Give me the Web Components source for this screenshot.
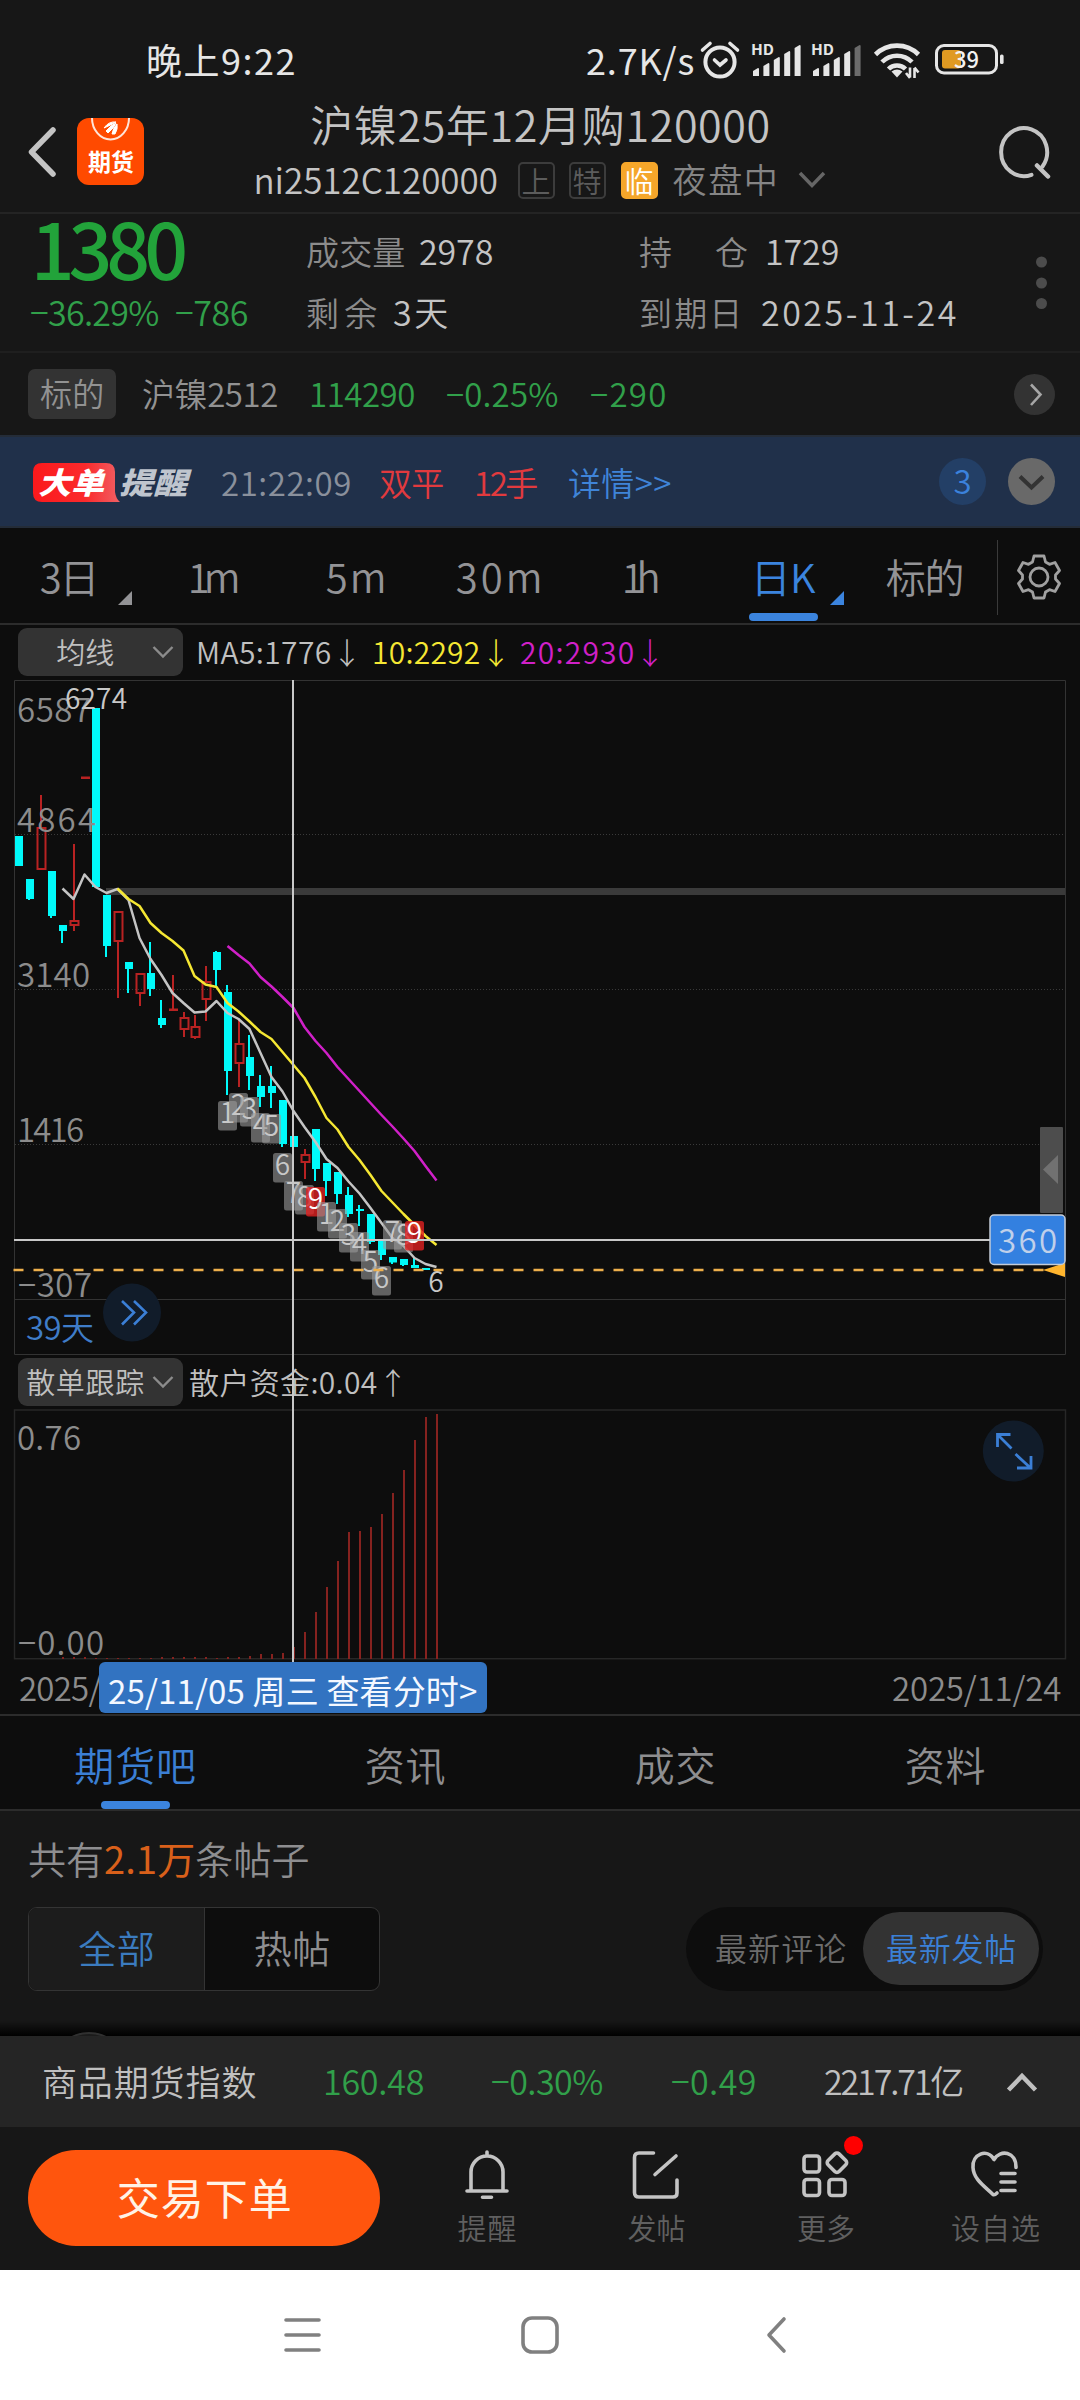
<!DOCTYPE html>
<html lang="zh-CN">
<head>
<meta charset="utf-8">
<title>沪镍25年12月购120000</title>
<style>
	html, body {
		margin: 0;
		padding: 0;
		background: #171717;
	}

	body {
		width: 1080px;
		height: 2400px;
		overflow: hidden;
		font-family: "Noto Sans CJK SC", "Noto Sans", sans-serif;
		font-weight: 350;
		color: #c4c4c4;
	}
</style>
</head>
<body>
<option-page></option-page>

<script>
// every block renders its static template into an open shadow root
class BaseBlock extends HTMLElement {
	constructor() {
		super();
		this.attachShadow({ mode: 'open' }).innerHTML = this.template();
	}
}

class OptionPage extends BaseBlock {
	template() {
		return `
		<style>
			:host { display: flex; flex-direction: column; height: 2400px; }
		</style>
		<status-bar></status-bar>
		<page-header></page-header>
		<quote-panel></quote-panel>
		<underlying-row></underlying-row>
		<order-alert></order-alert>
		<period-tabs></period-tabs>
		<market-chart></market-chart>
		<page-tabs></page-tabs>
		<post-panel></post-panel>
		<index-bar></index-bar>
		<trade-bar></trade-bar>
		<system-nav></system-nav>`;
	}
}

class StatusBar extends BaseBlock {
	template() {
		const bars = last => [0, 1, 2, 3, 4].map(i =>
			`<path d="M${2 + i * 10.4} ${[26, 21, 15, 9, 3][i] + 3}l5-3q1 0 1 1V34h-6Z" fill="${i === 4 ? last : '#e6e6e6'}"/>`).join('');
		return `
		<style>
			:host { display: flex; height: 100px; padding: 0 75px 0 147px; box-sizing: border-box; align-items: center; color: #e6e6e6; font-size: 36px; font-weight: 400; }
			.clock { margin-right: auto; }
			fit-text { line-height: 50px; height: 50px; margin-top: 17px; }
			svg { display: block; margin-top: 20px; overflow: visible; }
			text { font-size: 14px; font-weight: 700; fill: #e6e6e6; }
			.num { font-size: 23px; font-weight: 500; fill: #f2f2f2; }
		</style>
		<fit-text class="clock" w="147">晚上9:22</fit-text>
		<fit-text w="106">2.7K/s</fit-text>
		<svg style="margin-left:7px" width="41" height="38" viewBox="0 0 41 38" fill="none" stroke="#e6e6e6" stroke-linecap="round">
			<circle cx="20" cy="21" r="14.6" stroke-width="4"/>
			<path d="M2.5 9 10 2.5M30 2.5 37.500 9" stroke-width="3.600"/>
			<path d="m14.500 19 5.500 5 6-5" stroke-width="3.600"/>
		</svg>
		<svg style="margin-left:10px" width="50" height="36" viewBox="0 0 50 36">
			<text x="0" y="13" textLength="23" lengthAdjust="spacingAndGlyphs">HD</text>${bars('#e6e6e6')}
		</svg>
		<svg style="margin-left:10px" width="50" height="36" viewBox="0 0 50 36">
			<text x="0" y="13" textLength="23" lengthAdjust="spacingAndGlyphs">HD</text>${bars('#6b6b6b')}
		</svg>
		<svg style="margin-left:13px" width="47" height="37" viewBox="0 0 47 37" fill="none" stroke="#e6e6e6" stroke-width="4.600">
			<path d="M1.500 12.500a30.500 30.500 0 0 1 43 0"/>
			<path d="M8 20a21 21 0 0 1 30 0"/>
			<path d="M14.500 27a12 12 0 0 1 17 0"/>
			<path d="m17.500 29.500q5.500-4 11 0L23 35.500Z" fill="#e6e6e6" stroke="none"/>
			<path d="M36 25.500v10m-4-4.500 4 5M40.500 36V26m4 4.500-4-5" stroke-width="2.600"/>
		</svg>
		<svg style="margin-left:14px" width="70" height="32" viewBox="0 0 70 32">
			<rect x="1.500" y="1.500" width="60" height="27.500" rx="7.500" fill="none" stroke="#e6e6e6" stroke-width="3"/>
			<rect x="7" y="6" width="19" height="18.500" rx="3" fill="#e09a22"/>
			<rect x="65" y="10.500" width="3.600" height="9.500" rx="1.600" fill="#e6e6e6"/>
			<text class="num" x="19" y="24" textLength="25" lengthAdjust="spacingAndGlyphs">39</text>
		</svg>`;
	}
}

class PageHeader extends BaseBlock {
	template() {
		return `
		<style>
			:host { display: grid; grid-template-columns: 1fr auto 1fr; height: 114px; box-sizing: border-box; border-bottom: 2px solid #242424; }
			.left { display: flex; padding: 18px 0 0 28px; gap: 21px; }
			.left > svg { margin-top: 9px; }
			.logo { width: 67px; height: 67px; border-radius: 12px; background: #ff4a00; }
			.title { font-size: 43px; line-height: 47px; height: 50px; }
			.center { display: flex; flex-direction: column; align-items: center; }
			.sub { display: flex; align-items: center; font-size: 35px; height: 50px; margin-top: 5px; }
			.sub fit-text { line-height: 52px; height: 54px; }
			.tag { width: 37px; height: 37px; box-sizing: border-box; border: 2px solid #3c3c3c; border-radius: 5px; font-size: 29px; line-height: 32px; text-align: center; color: #5c5c5c; }
			.tag.hot { border-color: #f5a62a; background: #f5a62a; color: #fff; }
			.search { justify-self: end; margin: 25px 28px 0 0; }
		</style>
		<div class="left">
			<svg width="28" height="50" viewBox="0 0 28 50" fill="none" stroke="#c4c4c4" stroke-width="5.500" stroke-linecap="round" stroke-linejoin="round"><path d="M25 3 3.500 25 25 47"/></svg>
			<div class="logo">
				<svg width="67" height="67" viewBox="0 0 67 67">
					<path d="M15 0a18.500 21.500 0 0 0 37 0" fill="none" stroke="#ffe4d8" stroke-width="2"/>
					<path d="M27 10q5-7 12-6-5 3-12 6Zm2 3q5-6 10-8-2 5-8 10Zm6 3q1-6 5-10 1 5-2 10Z" fill="#fff" stroke="#fff" stroke-width="1"/>
					<text x="11" y="53" font-size="24" font-weight="700" fill="#fff" textLength="46" lengthAdjust="spacingAndGlyphs">期货</text>
				</svg>
			</div>
		</div>
		<div class="center">
			<fit-text class="title" w="457">沪镍25年12月购120000</fit-text>
			<div class="sub">
				<fit-text w="242">ni2512C120000</fit-text>
				<span class="tag" style="margin-left:21px">上</span>
				<span class="tag" style="margin-left:14px">特</span>
				<span class="tag hot" style="margin-left:15px">临</span>
				<fit-text w="103" style="margin-left:16px;color:#858585;font-size:34px">夜盘中</fit-text>
				<svg style="margin-left:21px" width="28" height="18" viewBox="0 0 28 18" fill="none" stroke="#666" stroke-width="3.500"><path d="M2 2 14 14.500 26 2"/></svg>
			</div>
		</div>
		<svg class="search" width="53" height="54" viewBox="0 0 53 54" fill="none" stroke="#c4c4c4" stroke-width="4" stroke-linecap="round">
			<path d="M32.500 49.800A23 24 0 1 1 43.500 41.500"/>
			<path d="m38 40.500 11 11" stroke-width="4.500"/>
		</svg>`;
	}
}

class QuotePanel extends BaseBlock {
	template() {
		return `
		<style>
			:host { display: grid; grid-template-columns: 276px 333px 396px auto; height: 139px; padding-left: 31px; box-sizing: border-box; border-bottom: 2px solid #1f1f1f; font-size: 34px; }
			.row { display: flex; line-height: 62px; height: 61px; }
			.col { padding-top: 6px; }
			.price { display: block; margin-left: 2px; font-size: 77px; line-height: 65px; height: 67px; font-weight: 500; color: #22a33a; }
			.down { color: #31a04a; }
			.label { color: #8c8c8c; font-size: 33px; }
			svg { display: block; margin-top: 42px; }
		</style>
		<div>
			<fit-text class="price" w="152">1380</fit-text>
			<div class="row down">
				<fit-text w="127">−36.29%</fit-text>
				<fit-text w="71" style="margin-left:18px">−786</fit-text>
			</div>
		</div>
		<div class="col">
			<div class="row"><fit-text class="label" w="97">成交量</fit-text><fit-text w="72" style="margin-left:16px">2978</fit-text></div>
			<div class="row"><fit-text class="label" w="69">剩余</fit-text><fit-text w="53" style="margin-left:18px">3天</fit-text></div>
		</div>
		<div class="col">
			<div class="row"><fit-text class="label" w="32">持</fit-text><fit-text class="label" w="32" style="margin-left:44px">仓</fit-text><fit-text w="72" style="margin-left:18px">1729</fit-text></div>
			<div class="row"><fit-text class="label" w="101">到期日</fit-text><fit-text w="193" style="margin-left:21px">2025-11-24</fit-text></div>
		</div>
		<svg width="12" height="54" viewBox="0 0 12 54" fill="#4c4c4c"><circle cx="5.500" cy="6" r="5.500"/><circle cx="5.500" cy="27" r="5.500"/><circle cx="5.500" cy="47.500" r="5.500"/></svg>`;
	}
}

class UnderlyingRow extends BaseBlock {
	template() {
		return `
		<style>
			:host { display: flex; align-items: center; height: 82px; padding: 0 25px 0 28px; box-sizing: border-box; font-size: 33px; color: #31a04a; }
			fit-text { line-height: 49px; height: 50px; }
			.tag { width: 88px; height: 50px; border-radius: 7px; background: #333; display: flex; justify-content: center; color: #929292; font-size: 32px; }
			.tag fit-text { line-height: 47px; }
			svg { margin-left: auto; }
		</style>
		<span class="tag"><fit-text w="62">标的</fit-text></span>
		<fit-text w="134" style="margin-left:27px;color:#929292">沪镍2512</fit-text>
		<fit-text w="104" style="margin-left:33px">114290</fit-text>
		<fit-text w="110" style="margin-left:33px">−0.25%</fit-text>
		<fit-text w="74" style="margin-left:34px">−290</fit-text>
		<svg width="41" height="41" viewBox="0 0 41 41"><circle cx="20.500" cy="20.500" r="20.500" fill="#333"/><path d="m17 10.500 9.500 10L17 31" fill="none" stroke="#a6a6a6" stroke-width="2.600"/></svg>`;
	}
}

class OrderAlert extends BaseBlock {
	template() {
		return `
		<style>
			:host { display: flex; align-items: center; height: 93px; padding: 0 25px 0 33px; box-sizing: border-box; background: #20304a; border-top: 2px solid #242c38; border-bottom: 2px solid #242c38; font-size: 33px; color: #e23a3e; }
			fit-text { line-height: 44px; height: 44px; }
			.brand { margin-top: 3px; overflow: visible; }
			.brand text { font-size: 30px; font-weight: 900; font-style: italic; }
			.count { width: 47px; height: 47px; border-radius: 50%; background: #233f66; color: #3b82dc; line-height: 44px; text-align: center; margin: 0 22px 0 auto; }
		</style>
		<svg class="brand" width="158" height="40" viewBox="0 0 158 40">
			<defs><linearGradient id="red"><stop offset="0" stop-color="#fb191c"/><stop offset=".6" stop-color="#fb2a2c"/><stop offset="1" stop-color="#f06064"/></linearGradient></defs>
			<path d="M9 0h64q9 0 9 9v20q1 7 5 10H9q-9 0-9-9V9q0-9 9-9Z" fill="url(#red)"/>
			<text x="5" y="31" fill="#fff" textLength="66" lengthAdjust="spacingAndGlyphs">大单</text>
			<text x="86" y="31" fill="#bfc5ce" textLength="68" lengthAdjust="spacingAndGlyphs">提醒</text>
		</svg>
		<fit-text w="128" style="margin-left:31px;color:#8a909c">21:22:09</fit-text>
		<fit-text w="63" style="margin-left:30px">双平</fit-text>
		<fit-text w="62" style="margin-left:32px">12手</fit-text>
		<fit-text w="101" style="margin-left:32px;color:#3f84d8">详情&gt;&gt;</fit-text>
		<span class="count">3</span>
		<svg width="47" height="47" viewBox="0 0 47 47"><circle cx="23.500" cy="23.500" r="23.500" fill="#696969"/><path d="m12 18.500 11.500 11 11.500-11" fill="none" stroke="#333" stroke-width="4"/></svg>`;
	}
}

class PeriodTabs extends BaseBlock {
	template() {
		return `
		<style>
			:host { display: flex; height: 97px; padding-left: 41px; box-sizing: border-box; background: #0d0d0d; border-bottom: 2px solid #2c2c2c; font-size: 40px; color: #939396; }
			fit-text { line-height: 96px; height: 95px; }
			.tri { margin-top: 63px; width: 14px; height: 14px; background: currentColor; clip-path: polygon(100% 0, 100% 100%, 0 100%); }
			.on { color: #3b84de; }
			.active { position: relative; }
			.active::after { content: ""; position: absolute; left: -3px; bottom: 2px; width: 69px; height: 8px; border-radius: 4px; background: #3b84de; }
			.gear { width: 83px; margin-left: auto; margin-top: 12px; height: 75px; border-left: 1px solid #3a3a3a; box-sizing: border-box; }
			.gear svg { margin: 14px 0 0 19px; }
		</style>
		<fit-text w="57">3日</fit-text><i class="tri" style="margin-left:20px"></i>
		<fit-text w="50" style="margin-left:57px">1m</fit-text>
		<fit-text w="58" style="margin-left:88px">5m</fit-text>
		<fit-text w="84" style="margin-left:72px">30m</fit-text>
		<fit-text w="36" style="margin-left:82px">1h</fit-text>
		<fit-text class="on active" w="62" style="margin-left:93px">日K</fit-text><i class="tri on" style="margin-left:16px"></i>
		<fit-text w="76" style="margin-left:43px">标的</fit-text>
		<div class="gear">
			<svg width="44" height="46" viewBox="0 0 44 46" fill="none" stroke="#a0a0a0" stroke-width="2.800" stroke-linejoin="round">
				<path d="M17 2h10l1.500 6 4 2.300 5.500-1.800 4.500 8-4 4.500v4l4 4.500-4.500 8-5.500-1.800-4 2.300-1.500 6H17l-1.500-6-4-2.300L6 37.500l-4.500-8 4-4.500v-4l-4-4.500 4.500-8 5.500 1.800 4-2.300Z"/>
				<circle cx="22" cy="23" r="9"/>
			</svg>
		</div>`;
	}
}

class IndicatorSelect extends BaseBlock {
	template() {
		return `
		<style>
			:host { display: flex; align-items: center; width: 165px; height: 48px; margin-left: 18px; padding-right: 9px; box-sizing: border-box; border-radius: 9px; background: #333; font-size: 29px; color: #c0c0c0; }
			.name { flex: 1; display: flex; justify-content: center; line-height: 46px; height: 48px; }
		</style>
		<span class="name"><slot></slot></span>
		<svg width="22" height="14" viewBox="0 0 22 14" fill="none" stroke="#8c8c8c" stroke-width="2.400"><path d="m1.500 2 9.500 9.500L20.500 2"/></svg>`;
	}
}

// x of a trading day on the shared time axis
const dayX = i => 19 + i * 11;

// [kind, open/close top, open/close bottom, high, low], in chart coordinates
const CANDLES = [
	['d', 836, 866, 836, 866], ['d', 879, 899, 879, 900], ['u', 827, 870, 795, 870],
	['d', 871, 916, 871, 918], ['d', 925, 931, 925, 943], ['u', 920, 926, 844, 931],
	['u', 777, 779, 777, 779], ['d', 708, 887, 708, 887], ['d', 895, 946, 895, 957],
	['u', 911, 942, 911, 998], ['d', 962, 969, 962, 993], ['u', 973, 994, 973, 1006],
	['d', 973, 989, 942, 996], ['d', 1018, 1025, 1000, 1028], ['u', 1009, 1011, 975, 1011],
	['u', 1017, 1030, 1012, 1037], ['u', 1026, 1038, 1015, 1039], ['u', 981, 1000, 966, 1021],
	['d', 952, 970, 951, 987], ['d', 992, 1071, 985, 1095], ['u', 1043, 1064, 1020, 1087],
	['d', 1057, 1076, 1035, 1090], ['d', 1086, 1097, 1075, 1107], ['d', 1086, 1093, 1066, 1108],
	['d', 1100, 1144, 1100, 1147], ['d', 1136, 1147, 1115, 1175], ['u', 1154, 1163, 1149, 1179],
	['d', 1129, 1169, 1129, 1181], ['d', 1163, 1181, 1163, 1196], ['d', 1172, 1194, 1172, 1204],
	['d', 1195, 1214, 1187, 1217], ['d', 1209, 1211, 1205, 1226], ['d', 1214, 1242, 1214, 1244],
	['d', 1241, 1255, 1241, 1260], ['d', 1257, 1262.5, 1257, 1264], ['d', 1259, 1265, 1259, 1266],
	['d', 1265, 1268, 1257, 1268], ['d', 1268, 1270, 1268, 1270]
];

const MA5 = [888.5, 899, 874.5, 887, 893, 889, 900, 938, 959, 975, 993, 1003, 1012.5, 1011.5, 1001, 1013, 1019, 1029, 1053, 1077, 1091.500, 1111, 1127, 1142, 1159, 1168, 1181.500, 1193.500, 1208, 1223, 1238, 1246, 1258, 1264, 1267];
const MA10 = [888.5, 899, 906, 923, 933, 941, 950.500, 976, 984.500, 987, 1003, 1011.500, 1021.500, 1032, 1039, 1052, 1065, 1078, 1097, 1118, 1129.500, 1147, 1160, 1175, 1191, 1202.500, 1214, 1225, 1236, 1245];
const MA20 = [946, 955, 963.5, 977, 986.500, 997, 1008, 1027, 1041, 1053, 1067, 1079, 1091, 1103, 1115, 1126.500, 1138.500, 1151, 1166, 1180.500];

// nine-turn counters: [digit, x, y, finished]
const TURNS = [
	[1, 218, 1101], [2, 229, 1093], [3, 240, 1097], [4, 251, 1113], [5, 262, 1114], [6, 273, 1153],
	[7, 284, 1181], [8, 295, 1185], [9, 306, 1187, true], [1, 317, 1202], [2, 328, 1209], [3, 339, 1223],
	[4, 350, 1232], [5, 361, 1250], [6, 372, 1266], [7, 383, 1220], [8, 394, 1223], [9, 405, 1221, true]
];

class KlineChart extends BaseBlock {
	template() {
		const line = (values, start, color) =>
			`<polyline points="${values.map((y, i) => `${dayX(start + i) - .5},${y}`).join(' ')}" fill="none" stroke="${color}" stroke-width="2.500" stroke-linejoin="round"/>`;

		const candle = ([kind, top, bottom, high, low], i) => {
			const x = dayX(i);
			if (kind === 'd') {
				return `<path d="M${x - 1} ${high}V${low}" stroke="#00fafa" stroke-width="2"/><rect x="${x - 4}" y="${top}" width="8" height="${bottom - top}" fill="#00fafa"/>`;
			}
			const body = bottom - top > 3
				? `<rect x="${x - 3.500}" y="${top + 1}" width="8" height="${bottom - top - 2}" fill="none" stroke="#b82222" stroke-width="2"/>`
				: `<rect x="${x - 4}" y="${top - .5}" width="9" height="${bottom - top + .5}" fill="#b82222"/>`;
			return `<path d="M${x} ${high}V${top}M${x} ${bottom}V${low}" stroke="#b82222" stroke-width="2"/>${body}`;
		};

		const turn = ([n, x, y, done]) =>
			`<rect x="${x}" y="${y}" width="19" height="29.500" rx="2.500" fill="${done ? '#e02020' : '#9a9a9a'}" fill-opacity="${done ? .8 : .6}"/>
			<text x="${x + 9.500}" y="${y + 22}" font-size="28" text-anchor="middle" fill="${done ? '#fff' : '#c8c8c8'}">${n}</text>`;

		return `
		<style>
			:host { display: block; height: 676px; }
			svg { display: block; }
			.axis { font-size: 33px; fill: #8c8c8c; }
		</style>
		<svg width="1080" height="676" viewBox="0 679 1080 676">
			<path d="M14.500 680.500H1065.500V1354.500H14.500ZM14.500 1299.500H1065.500" fill="none" stroke="#333"/>
			<path d="M15 834.500H1065M15 989.500H1065M15 1144.500H1065" stroke="#3a3a3a" stroke-dasharray="1 2"/>
			<rect x="106" y="888" width="959" height="7" fill="#3a3a3a"/>
			${CANDLES.map(candle).join('')}
			<g class="axis">
				<text x="17" y="722" textLength="74">6587</text>
				<text x="17" y="832" textLength="79">4864</text>
				<text x="17" y="987" textLength="73">3140</text>
				<text x="17" y="1142" textLength="67">1416</text>
				<text x="18" y="1297" textLength="74">−307</text>
			</g>
			<text x="65" y="709" font-size="28" fill="#c8c8c8" textLength="62">6274</text>
			${line(MA5, 4, '#c4c4c4')}${line(MA20, 19, '#d020c8')}${line(MA10, 9, '#f5e733')}
			${TURNS.map(turn).join('')}
			<text x="436" y="1292" font-size="28" text-anchor="middle" fill="#c8c8c8">6</text>
			<path d="M13.500 1270H1050" stroke="#eeb04c" stroke-width="2.300" stroke-dasharray="10 10"/>
			<path d="M1043 1270 1065 1263V1277Z" fill="#ffb52e"/>
			<path d="M14 1240H990" stroke="#c8c8c8" stroke-width="2"/>
			<rect x="1040" y="1127" width="23" height="86" rx="1" fill="#4d4d4d"/>
			<path d="M1043 1169.500 1058 1155V1184Z" fill="#717171"/>
			<rect x="990" y="1215" width="75" height="49.500" rx="4" fill="#3380e0" stroke="#c4ccd8" stroke-width="1.500"/>
			<text x="998" y="1253" font-size="33" fill="#c0d0ea" textLength="59">360</text>
			<text x="26" y="1340" font-size="33" fill="#3f7cc8" textLength="68">39天</text>
			<circle cx="132" cy="1312.500" r="29" fill="#111c2a"/>
			<path d="m122 1301 12 11.500-12 12M134 1301l12 11.500-12 12" fill="none" stroke="#3b7fd6" stroke-width="2.600"/>
		</svg>`;
	}
}

// tops of the retail-flow bars for days 4..38
const FLOWS = [1657, 1657, 1657, 1658, 1658, 1658, 1658, 1658, 1658, 1657, 1657, 1657, 1657, 1657, 1658, 1657, 1657, 1656, 1654, 1654, 1653, 1647, 1632, 1612, 1587, 1561, 1532, 1531, 1527, 1514, 1493, 1470, 1440, 1417, 1414];

class FlowChart extends BaseBlock {
	template() {
		return `
		<style>
			:host { display: block; height: 251px; }
			svg { display: block; }
			text { font-size: 33px; fill: #8c8c8c; }
		</style>
		<svg width="1080" height="251" viewBox="0 1409 1080 251">
			<rect x="14.500" y="1410" width="1051" height="248.700" fill="none" stroke="#272727" stroke-width="1.500"/>
			<path d="${FLOWS.map((y, i) => `M${dayX(i + 4)} ${y}V1659`).join('')}" stroke="#86221f" stroke-width="2"/>
			<text x="17" y="1450" textLength="64">0.76</text>
			<text x="18" y="1655" textLength="86">−0.00</text>
			<circle cx="1013.300" cy="1451" r="30.500" fill="#111c2a"/>
			<path d="M1011.500 1448.500 998 1435M997.500 1447v-12.500h13M1015.500 1454l14.500 13.500M1031 1456v12h-14" fill="none" stroke="#3b7fd6" stroke-width="2.800"/>
		</svg>`;
	}
}

class MarketChart extends BaseBlock {
	template() {
		return `
		<style>
			:host { display: block; position: relative; height: 1091px; box-sizing: border-box; background: #0d0d0d; border-bottom: 2px solid #2c2c2c; }
			.legend { display: flex; align-items: center; height: 54px; font-size: 30px; color: #c0c0c0; }
			.legend > fit-text { line-height: 49px; height: 50px; }
			.legend .arrow { margin-left: 3px; font-weight: 300; }
			.dates { display: flex; justify-content: space-between; height: 54px; padding: 0 20px; font-size: 33px; color: #8c8c8c; }
			.dates fit-text { line-height: 55px; }
			.cursor { position: absolute; left: 292px; top: 55px; width: 2px; height: 983px; background: #c8c8c8; }
			.tip { position: absolute; left: 99px; top: 1037px; width: 388px; height: 51px; padding-left: 10px; box-sizing: border-box; border-radius: 6px; background: #3273c1; color: #f4f8ff; font-size: 33px; font-weight: 400; line-height: 56px; }
		</style>
		<div class="legend">
			<indicator-select><fit-text w="56">均线</fit-text></indicator-select>
			<fit-text w="133" style="margin-left:14px">MA5:1776</fit-text><fit-text class="arrow" w="12">↓</fit-text>
			<fit-text w="106" style="margin-left:28px;color:#f5e733">10:2292</fit-text><fit-text class="arrow" w="12" style="color:#f5e733">↓</fit-text>
			<fit-text w="112" style="margin-left:27px;color:#d020c8">20:2930</fit-text><fit-text class="arrow" w="12" style="color:#d020c8">↓</fit-text>
		</div>
		<kline-chart></kline-chart>
		<div class="legend">
			<indicator-select><fit-text w="116">散单跟踪</fit-text></indicator-select>
			<fit-text w="186" style="margin-left:7px">散户资金:0.04</fit-text><fit-text class="arrow" w="12">↑</fit-text>
		</div>
		<flow-chart></flow-chart>
		<div class="dates"><fit-text w="80">2025/</fit-text><fit-text w="167">2025/11/24</fit-text></div>
		<div class="cursor"></div>
		<div class="tip"><fit-text w="367">25/11/05 周三 查看分时&gt;</fit-text></div>`;
	}
}

class PageTabs extends BaseBlock {
	template() {
		return `
		<style>
			:host { display: grid; grid-template-columns: repeat(4, 1fr); height: 95px; box-sizing: border-box; background: #0d0d0d; border-bottom: 2px solid #2c2c2c; font-size: 40px; color: #8e8e90; }
			div { display: flex; justify-content: center; position: relative; line-height: 96px; height: 92px; }
			.on { color: #3b7fd4; }
			.on::after { content: ""; position: absolute; left: 101px; bottom: -1px; width: 69px; height: 8px; border-radius: 4px; background: #3b84de; }
		</style>
		<div class="on"><fit-text w="119">期货吧</fit-text></div>
		<div><fit-text w="78">资讯</fit-text></div>
		<div><fit-text w="78">成交</fit-text></div>
		<div><fit-text w="78">资料</fit-text></div>`;
	}
}

class PostPanel extends BaseBlock {
	template() {
		return `
		<style>
			:host { display: block; position: relative; height: 225px; overflow: hidden; background: #171717; font-size: 38px; color: #8e8e90; }
			.total { display: flex; padding-left: 29px; height: 96px; line-height: 94px; }
			.total b { font-weight: 400; color: #d9601a; }
			.filters { display: flex; justify-content: space-between; padding: 0 37px 0 28px; }
			.seg { display: flex; width: 352px; height: 84px; box-sizing: border-box; border: 1px solid #343434; border-radius: 9px; overflow: hidden; background: #0d0d0d; }
			.seg div { flex: 1; display: flex; justify-content: center; line-height: 78px; }
			.seg .on { background: #1c1c1c; border-right: 1px solid #343434; color: #3b7bbf; }
			.sort { display: flex; width: 357px; height: 84px; padding: 5px 4px 5px 30px; box-sizing: border-box; border-radius: 42px; background: #0d0d0d; justify-content: space-between; font-size: 32px; line-height: 71px; color: #6c6c6c; }
			.sort div { display: flex; justify-content: center; width: 176px; height: 73px; border-radius: 37px; background: #333; color: #3b80d6; line-height: 71px; }
			.avatar { position: absolute; left: 51px; top: 220.500px; width: 76px; height: 76px; border-radius: 50%; background: #1b1b1b; box-sizing: border-box; border: 2px solid #303030; }
			.shade { position: absolute; left: 0; right: 0; bottom: 0; height: 15px; background: linear-gradient(transparent, #000); }
		</style>
		<div class="total"><fit-text w="279">共有<b>2.1万</b>条帖子</fit-text></div>
		<div class="filters">
			<div class="seg">
				<div class="on"><fit-text w="74">全部</fit-text></div>
				<div><fit-text w="74">热帖</fit-text></div>
			</div>
			<div class="sort">
				<fit-text w="129">最新评论</fit-text>
				<div><fit-text w="128">最新发帖</fit-text></div>
			</div>
		</div>
		<div class="shade"></div>
		<div class="avatar"></div>`;
	}
}

class IndexBar extends BaseBlock {
	template() {
		return `
		<style>
			:host { display: flex; height: 91px; padding-left: 43px; box-sizing: border-box; background: #252525; font-size: 34px; line-height: 89px; color: #31a04a; }
			.white { color: #c0c0c0; }
			svg { margin: 36px 0 0 43px; }
		</style>
		<fit-text class="white" w="212" style="font-size:35px">商品期货指数</fit-text>
		<fit-text w="99" style="margin-left:69px">160.48</fit-text>
		<fit-text w="110" style="margin-left:69px">−0.30%</fit-text>
		<fit-text w="83" style="margin-left:70px">−0.49</fit-text>
		<fit-text class="white" w="138" style="margin-left:70px">2217.71亿</fit-text>
		<svg width="32" height="20" viewBox="0 0 32 20" fill="none" stroke="#c0c0c0" stroke-width="4.500"><path d="M2.500 18 16 4l13.500 14"/></svg>`;
	}
}

class ToolItem extends BaseBlock {
	template() {
		return `
		<style>
			:host { display: flex; flex-direction: column; align-items: center; font-size: 29px; line-height: 40px; color: #606060; }
			.name { margin-top: 8px; }
		</style>
		<slot name="icon"></slot>
		<div class="name"><slot></slot></div>`;
	}
}

class TradeBar extends BaseBlock {
	template() {
		return `
		<style>
			:host { display: flex; height: 143px; padding-left: 28px; box-sizing: border-box; background: #171717; }
			.order { display: flex; justify-content: center; width: 352px; height: 96px; margin: 23px 22px 0 0; border-radius: 48px; background: #ff550d; color: #fff3e6; font-size: 43px; font-weight: 400; line-height: 93px; }
			tool-item { width: 169.500px; margin-top: 22px; }
			.more { position: relative; }
			.more::after { content: ""; position: absolute; left: 103px; top: -13px; width: 19px; height: 19px; border-radius: 50%; background: #f00; }
			svg { flex: none; fill: none; stroke: #c4c4c4; stroke-width: 3.600; stroke-linecap: round; stroke-linejoin: round; }
		</style>
		<div class="order"><fit-text w="172">交易下单</fit-text></div>
		<tool-item>
			<svg slot="icon" width="50" height="50" viewBox="0 0 50 50"><path d="M25 3v4M9 41V23a16 16 0 0 1 32 0v18M5 42h40M20.500 48.200h9"/></svg>
			<fit-text w="57">提醒</fit-text>
		</tool-item>
		<tool-item>
			<svg slot="icon" width="50" height="50" viewBox="0 0 50 50"><path d="M22.500 4H8q-4.500 0-4.500 4.500v35Q3.500 48 8 48h34q4 0 4-4V31M24 25.500 45 7"/></svg>
			<fit-text w="56">发帖</fit-text>
		</tool-item>
		<tool-item class="more">
			<svg slot="icon" width="50" height="50" viewBox="0 0 50 50"><rect x="3" y="7" width="15.500" height="16" rx="3"/><rect x="3" y="30.500" width="15.500" height="16" rx="3"/><rect x="28" y="30.500" width="16" height="16" rx="3"/><rect x="28.200" y="6" width="15.500" height="15.500" rx="3" transform="rotate(45 36 13.700)"/></svg>
			<fit-text w="56">更多</fit-text>
		</tool-item>
		<tool-item>
			<svg slot="icon" width="50" height="50" viewBox="0 0 50 50"><path d="M46 18.500C46.500 2.500 30 0 24 10.500 17-1 2 5 3 18.500c.500 12 12 19 20 27q1.500 1 4-1.500M31 24.500h14M31 33h14M31 41.500h14"/></svg>
			<fit-text w="87">设自选</fit-text>
		</tool-item>`;
	}
}

class SystemNav extends BaseBlock {
	template() {
		return `
		<style>
			:host { display: flex; align-items: center; gap: 200px; height: 130px; padding-left: 284px; box-sizing: border-box; background: #fff; }
			svg { display: block; fill: none; stroke: #808080; stroke-width: 3.600; stroke-linecap: round; stroke-linejoin: round; }
		</style>
		<svg width="37" height="38" viewBox="0 0 37 38"><path d="M2 4h33M2 19h33M2 34h33"/></svg>
		<svg width="38" height="38" viewBox="0 0 38 38"><rect x="2" y="2" width="34" height="34" rx="9"/></svg>
		<svg style="margin-left:7px" width="21" height="38" viewBox="0 0 21 38"><path d="M18 3 3 19l15 16"/></svg>`;
	}
}

// spreads its text over a fixed width by letter spacing
class FitText extends BaseBlock {
	template() {
		return `
		<style>
			:host { display: block; flex: none; }
			span { display: inline-block; margin-left: -.03em; white-space: pre; }
		</style>
		<span><slot></slot></span>`;
	}

	connectedCallback() {
		const width = Number(this.getAttribute('w'));
		const span = this.shadowRoot.querySelector('span');
		const count = this.textContent.length;
		const size = parseFloat(getComputedStyle(this).fontSize);
		this.style.width = `${width}px`;
		if (count > 1) {
			span.style.letterSpacing = `${(width + size * .07 - span.getBoundingClientRect().width) / (count - 1)}px`;
		}
	}
}

customElements.define('option-page', OptionPage);
customElements.define('status-bar', StatusBar);
customElements.define('page-header', PageHeader);
customElements.define('quote-panel', QuotePanel);
customElements.define('underlying-row', UnderlyingRow);
customElements.define('order-alert', OrderAlert);
customElements.define('period-tabs', PeriodTabs);
customElements.define('market-chart', MarketChart);
customElements.define('indicator-select', IndicatorSelect);
customElements.define('kline-chart', KlineChart);
customElements.define('flow-chart', FlowChart);
customElements.define('page-tabs', PageTabs);
customElements.define('post-panel', PostPanel);
customElements.define('index-bar', IndexBar);
customElements.define('trade-bar', TradeBar);
customElements.define('tool-item', ToolItem);
customElements.define('system-nav', SystemNav);
// last, so the text is measured with its final font
customElements.define('fit-text', FitText);
</script>
</body>
</html>
